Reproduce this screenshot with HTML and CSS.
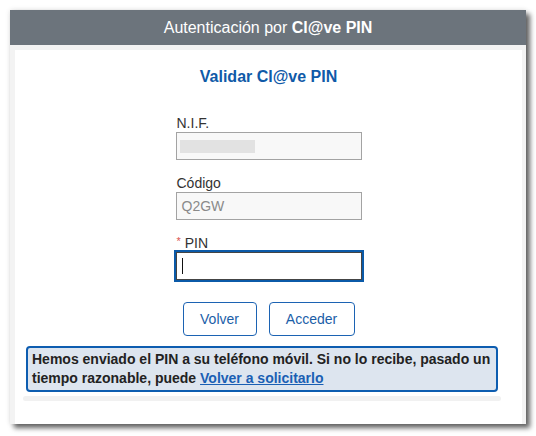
FILE: index.html
```html
<!DOCTYPE html>
<html lang="es">
<head>
<meta charset="utf-8">
<title>Cl@ve PIN</title>
<link rel="stylesheet" href="styles.css">
</head>
<body>
<div class="window">
  <div class="header">Autenticación por <b>Cl@ve PIN</b></div>
  <div class="frame">
    <div class="panel">
      <h1 class="title">Validar Cl@ve PIN</h1>
      <div class="form">
        <label class="label">N.I.F.</label>
        <div class="input"><span class="redacted"></span></div>
        <label class="label gap">Código</label>
        <div class="input"><span class="value">Q2GW</span></div>
        <label class="label gap2"><span class="req">*</span> PIN</label>
        <div class="input focus"><span class="caret"></span></div>
      </div>
      <div class="buttons">
        <button class="btn back">Volver</button>
        <button class="btn go">Acceder</button>
      </div>
      <div class="info">Hemos enviado el PIN a su teléfono móvil. Si no lo recibe, pasado un tiempo razonable, puede <a href="#" class="link">Volver a solicitarlo</a></div>
      <div class="bar"></div>
    </div>
  </div>
</div>
</body>
</html>
```

FILE: styles.css
```css
* { box-sizing: border-box; }
html, body { margin: 0; padding: 0; background: #ffffff; }
body {
  font-family: "Liberation Sans", Arial, sans-serif;
  min-height: 436px;
  padding-top: 10px;
  padding-left: 10px;
}

.window {
  width: 516px;
  height: 414px;
  display: flex;
  flex-direction: column;
  box-shadow: 4px 4px 5px rgba(0,0,0,0.6), 0 0 5px rgba(0,0,0,0.12);
  background: #f3f3f3;
}

.header {
  height: 35px;
  background: #6c747c;
  color: #ffffff;
  font-size: 16px;
  line-height: 35px;
  text-align: center;
}
.header b { font-weight: bold; }

.frame {
  flex: 1;
  display: flex;
  padding: 5px 4px 0 5px;
  background: #f3f3f3;
}

.panel {
  flex: 1;
  background: #ffffff;
  display: flex;
  flex-direction: column;
  align-items: center;
}

.title {
  margin: 17px 0 0;
  font-size: 16px;
  line-height: 20px;
  font-weight: bold;
  color: #0f5aa8;
}

.form {
  margin-top: 27px;
  width: 186px;
  display: flex;
  flex-direction: column;
}

.label {
  display: block;
  font-size: 14px;
  line-height: 18px;
  color: #333333;
  padding-left: 1px;
}
.label.gap { margin-top: 14px; }
.label.gap2 { margin-top: 14px; }
.req { color: #d9534f; font-size: 11px; line-height: 0; vertical-align: 3px; }

.input {
  height: 28px;
  border: 1px solid #a3a3a3;
  background: #f8f8f8;
  display: flex;
  align-items: center;
  padding-left: 5px;
}
.redacted {
  width: 75px;
  height: 13px;
  background: #e2e2e2;
  margin-left: -2px;
}
.value {
  font-size: 14px;
  color: #8a8a8a;
}
.input.focus {
  background: #ffffff;
  border: 1px solid #444444;
  outline: 2px solid #0b5aa8;
}
.caret {
  width: 1px;
  height: 16px;
  background: #111111;
}

.buttons {
  margin-top: 22px;
  display: flex;
  gap: 12px;
}
.btn {
  height: 34px;
  background: #ffffff;
  border: 1px solid #1c63b3;
  border-radius: 4px;
  color: #1b5ea8;
  font-family: "Liberation Sans", Arial, sans-serif;
  font-size: 14px;
  padding: 0;
}
.btn.back { width: 74px; }
.btn.go { width: 86px; }

.info {
  align-self: stretch;
  margin: 10px 24px 0 11px;
  height: 46px;
  border: 2px solid #0d5db0;
  border-radius: 4px;
  background: #dde5ef;
  padding: 2px 2px 0 4px;
  font-size: 14px;
  line-height: 19px;
  font-weight: bold;
  color: #222222;
}
.link {
  color: #1a5fb4;
  text-decoration: underline;
}

.bar {
  align-self: stretch;
  margin: 4px 21px 0 8px;
  height: 5px;
  border-radius: 3px;
  background: #f1f1f1;
}
```
